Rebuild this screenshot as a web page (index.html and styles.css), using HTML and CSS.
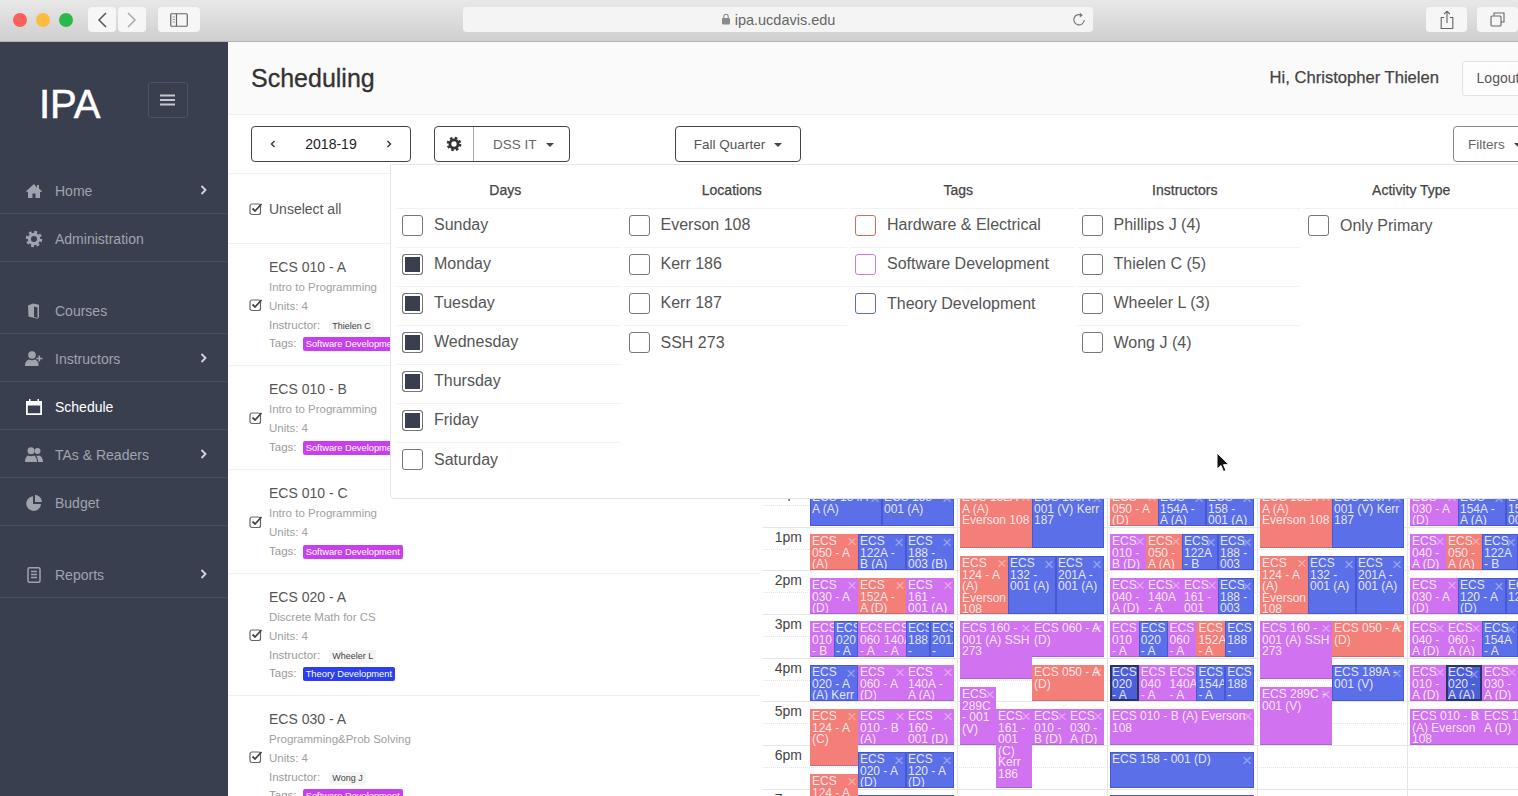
FILE: index.html
```html
<!DOCTYPE html>
<html lang="en">
<head>
<meta charset="utf-8">
<title>Scheduling - IPA</title>
<link rel="stylesheet" href="styles.css">
</head>
<body>
<header class="chrome">
  <div class="dots"><span class="dot red-dot"></span><span class="dot yellow-dot"></span><span class="dot green-dot"></span></div>
  <div class="nav-btns">
    <button class="cbtn back"><svg width="12" height="18" viewBox="0 0 12 18"><path d="M10 2 3 9l7 7" fill="none" stroke="#555" stroke-width="1.5"/></svg></button>
    <button class="cbtn back"><svg width="12" height="18" viewBox="0 0 12 18"><path d="M2 2l7 7-7 7" fill="none" stroke="#aaa" stroke-width="1.5"/></svg></button>
  </div>
  <button class="cbtn side"><svg width="18" height="14" viewBox="0 0 18 14"><rect x=".75" y=".75" width="16.5" height="12.5" rx="1" fill="none" stroke="#666" stroke-width="1.2"/><path d="M6.5 1v12" stroke="#666" stroke-width="1.2"/><path d="M2.5 4h2.5M2.5 6.5h2.5M2.5 9h2.5" stroke="#999"/></svg></button>
  <div class="url">
    <span class="url-text"><svg width="10" height="12" viewBox="0 0 10 12"><rect x="1" y="5" width="8" height="6.5" rx="1" fill="#8a8a8a"/><path d="M2.8 5V3.4a2.2 2.2 0 0 1 4.4 0V5" fill="none" stroke="#8a8a8a" stroke-width="1.1"/></svg> ipa.ucdavis.edu</span>
    <svg class="reload" width="14" height="15" viewBox="0 0 14 15"><path d="M9.5 3.2A5.2 5.2 0 1 0 12.2 8" fill="none" stroke="#777" stroke-width="1.2"/><path d="M7.8 .6l3 2.6-3 2.4z" fill="#777"/></svg>
  </div>
  <button class="cbtn share"><svg width="14" height="20" viewBox="0 0 14 20"><path d="M4 7.5H1.2v11h11.6v-11H10M7 13V1.5M4.2 4 7 1.2 9.8 4" fill="none" stroke="#666" stroke-width="1.1"/></svg></button>
  <button class="cbtn tabs"><svg width="15" height="15" viewBox="0 0 15 15"><path d="M4 3.5V1h10v9h-3" fill="none" stroke="#666" stroke-width="1.1"/><rect x="1" y="4" width="10" height="10" rx="1" fill="none" stroke="#666" stroke-width="1.1"/></svg></button>
</header>

<div class="app">
  <aside class="sidebar">
    <div class="brand">
      <span class="logo">IPA</span>
      <button class="burger"><svg width="15" height="12" viewBox="0 0 15 12"><path d="M0 1.5h15M0 6h15M0 10.5h15" stroke="#c3c6cf" stroke-width="2.2"/></svg></button>
    </div>
    <nav class="nav-group">
      <a class="nav-item"><svg class="nav-icon" viewBox="0 0 18 18"><path d="M9 2 1 9.3l1 1L3 9.5V16h4.5v-4.5h3V16H15V9.5l1 .8 1-1-3-2.7V3h-2v2.8z"/></svg><span>Home</span><svg class="chev" viewBox="0 0 7 10"><path d="M1.5 1l4 4-4 4"/></svg></a>
      <a class="nav-item"><svg class="nav-icon" viewBox="0 0 18 18"><circle cx="9" cy="9" r="4.6" fill="none" stroke="#a0a3ad" stroke-width="3.2"/><circle cx="9" cy="9" r="7" fill="none" stroke="#a0a3ad" stroke-width="2.4" stroke-dasharray="2.9 2.6"/></svg><span>Administration</span></a>
    </nav>
    <nav class="nav-group">
      <a class="nav-item"><svg class="nav-icon" viewBox="0 0 18 18"><path d="M3 3.5 8 1.5l6 1.3v12.5l-1.5 1.5L3.5 14.5zM9 4.5V15l3.5 1V5.4z"/></svg><span>Courses</span></a>
      <a class="nav-item"><svg class="nav-icon" viewBox="0 0 18 18"><circle cx="7" cy="5" r="3.8"/><path d="M0 16c0-4 2-6 4-6.5 1.800 1 4.200 1 6 0 1.400.4 2.800 1.600 3.500 3.500V16z"/><path d="M13.500 5.500h1.600v2.200h2.400v1.600h-2.400v2.200h-1.600V9.300h-2.300V7.700h2.300z"/></svg><span>Instructors</span><svg class="chev" viewBox="0 0 7 10"><path d="M1.500 1l4 4-4 4"/></svg></a>
      <a class="nav-item active"><svg class="nav-icon" viewBox="0 0 18 18"><path d="M1 3h3V1h1.500v2h7V1H14v2h3v14H1zM2.800 7.500v7.700h12.400V7.500z"/></svg><span>Schedule</span></a>
      <a class="nav-item"><svg class="nav-icon" viewBox="0 0 18 18"><circle cx="6" cy="4.800" r="3.500"/><circle cx="12.500" cy="5" r="3"/><path d="M0 16c0-3 1-5.500 3-6.500 2 1 4 1 6 0 2 1 3 3.500 3 6.500z"/><path d="M13 16c0-2.500-.5-5-2-6.500 1.200.5 2.300.5 3.500 0 2 1 3.500 3 3.500 6.500z"/></svg><span>TAs &amp; Readers</span><svg class="chev" viewBox="0 0 7 10"><path d="M1.500 1l4 4-4 4"/></svg></a>
      <a class="nav-item"><svg class="nav-icon" viewBox="0 0 18 18"><path d="M8 2.200A7.400 7.400 0 1 0 16 10H8z"/><path d="M10 .8A7.500 7.500 0 0 1 17 8h-7z"/></svg><span>Budget</span></a>
    </nav>
    <nav class="nav-group">
      <a class="nav-item"><svg class="nav-icon" viewBox="0 0 18 18"><rect x="3" y="1.800" width="12" height="14.500" rx="1.500" fill="none" stroke="#a0a3ad" stroke-width="1.500"/><path d="M6 5.500h6M6 8.500h6M6 11.500h6" stroke="#a0a3ad" stroke-width="1.500"/></svg><span>Reports</span><svg class="chev" viewBox="0 0 7 10"><path d="M1.500 1l4 4-4 4"/></svg></a>
    </nav>
  </aside>

  <main class="main">
    <div class="page-head">
      <h1>Scheduling</h1>
      <span class="hello">Hi, Christopher Thielen</span>
      <button class="logout">Logout</button>
    </div>
    <div class="toolbar">
      <div class="year"><svg class="mini" viewBox="0 0 6 8"><path d="M4.500 1 1.500 4l3 3"/></svg><span>2018-19</span><svg class="mini" viewBox="0 0 6 8"><path d="M1.500 1l3 3-3 3"/></svg></div>
      <div class="dept">
        <span class="gear"><svg width="16" height="16" viewBox="0 0 18 18"><circle cx="9" cy="9" r="4.600" fill="none" stroke="#333" stroke-width="3.200"/><circle cx="9" cy="9" r="7" fill="none" stroke="#333" stroke-width="2.400" stroke-dasharray="2.900 2.600"/></svg></span>
        <span class="dept-name">DSS IT<i class="caret"></i></span>
      </div>
      <button class="quarter">Fall Quarter<i class="caret"></i></button>
      <button class="filters">Filters<i class="caret"></i></button>
    </div>
    <div class="content">
      <section class="list">
        <div class="unselect"><svg class="check" viewBox="0 0 14 14"><rect x="1" y="2" width="10.500" height="10.500" rx="2" fill="none" stroke="#666" stroke-width="1.200"/><path d="M3.500 6.500l2.500 2.500 6.500-7" fill="none" stroke="#444" stroke-width="1.800"/></svg><span>Unselect all</span></div>

        <article class="course">
          <svg class="check" viewBox="0 0 14 14"><rect x="1" y="2" width="10.500" height="10.500" rx="2" fill="none" stroke="#666" stroke-width="1.200"/><path d="M3.500 6.500l2.500 2.500 6.500-7" fill="none" stroke="#444" stroke-width="1.800"/></svg>
          <div>
            <div class="c-title">ECS 010 - A</div>
            <div class="c-sub">Intro to Programming</div>
            <div class="c-units">Units: 4</div>
            <div class="c-inst">Instructor: <span class="pill">Thielen C</span></div>
            <div class="c-tags">Tags: <span class="tag soft">Software Development</span></div>
          </div>
        </article>
        <article class="course">
          <svg class="check" viewBox="0 0 14 14"><rect x="1" y="2" width="10.500" height="10.500" rx="2" fill="none" stroke="#666" stroke-width="1.200"/><path d="M3.500 6.500l2.500 2.500 6.500-7" fill="none" stroke="#444" stroke-width="1.800"/></svg>
          <div>
            <div class="c-title">ECS 010 - B</div>
            <div class="c-sub">Intro to Programming</div>
            <div class="c-units">Units: 4</div>
            <div class="c-inst">Tags: <span class="tag soft">Software Development</span></div>
          </div>
        </article>
        <article class="course">
          <svg class="check" viewBox="0 0 14 14"><rect x="1" y="2" width="10.500" height="10.500" rx="2" fill="none" stroke="#666" stroke-width="1.200"/><path d="M3.500 6.500l2.500 2.500 6.500-7" fill="none" stroke="#444" stroke-width="1.800"/></svg>
          <div>
            <div class="c-title">ECS 010 - C</div>
            <div class="c-sub">Intro to Programming</div>
            <div class="c-units">Units: 4</div>
            <div class="c-inst">Tags: <span class="tag soft">Software Development</span></div>
          </div>
        </article>
        <article class="course">
          <svg class="check" viewBox="0 0 14 14"><rect x="1" y="2" width="10.500" height="10.500" rx="2" fill="none" stroke="#666" stroke-width="1.200"/><path d="M3.500 6.500l2.500 2.500 6.500-7" fill="none" stroke="#444" stroke-width="1.800"/></svg>
          <div>
            <div class="c-title">ECS 020 - A</div>
            <div class="c-sub">Discrete Math for CS</div>
            <div class="c-units">Units: 4</div>
            <div class="c-inst">Instructor: <span class="pill">Wheeler L</span></div>
            <div class="c-tags">Tags: <span class="tag theory">Theory Development</span></div>
          </div>
        </article>
        <article class="course">
          <svg class="check" viewBox="0 0 14 14"><rect x="1" y="2" width="10.500" height="10.500" rx="2" fill="none" stroke="#666" stroke-width="1.200"/><path d="M3.500 6.500l2.500 2.500 6.500-7" fill="none" stroke="#444" stroke-width="1.800"/></svg>
          <div>
            <div class="c-title">ECS 030 - A</div>
            <div class="c-sub">Programming&amp;Prob Solving</div>
            <div class="c-units">Units: 4</div>
            <div class="c-inst">Instructor: <span class="pill">Wong J</span></div>
            <div class="c-tags">Tags: <span class="tag soft">Software Development</span></div>
          </div>
        </article>
      </section>

      <section class="cal">
        <div class="hour"><span>12pm</span></div>
        <div class="hour"><span>1pm</span></div>
        <div class="hour"><span>2pm</span></div>
        <div class="hour"><span>3pm</span></div>
        <div class="hour"><span>4pm</span></div>
        <div class="hour"><span>5pm</span></div>
        <div class="hour"><span>6pm</span></div>
        <div class="hour"><span>7pm</span></div>
        <div class="days">
          <div class="day">
            <div class="ev b" style="left:0;width:50%;top:7px;height:36px">ECS 154A - A (A)<i>×</i></div>
            <div class="ev b" style="left:50%;width:50%;top:7px;height:36px">ECS 158 - 001 (A)<i>×</i></div>
            <div class="ev r" style="left:0;width:33.33%;top:51px;height:36px">ECS 050 - A (A)<i>×</i></div>
            <div class="ev b" style="left:33.33%;width:33.33%;top:51px;height:36px">ECS 122A - B (A)<i>×</i></div>
            <div class="ev b" style="left:66.66%;width:33.33%;top:51px;height:36px">ECS 188 - 003 (B)<i>×</i></div>
            <div class="ev p" style="left:0;width:33.33%;top:95px;height:36px">ECS 030 - A (D)<i>×</i></div>
            <div class="ev r" style="left:33.33%;width:33.33%;top:95px;height:36px">ECS 152A - A (D)<i>×</i></div>
            <div class="ev p" style="left:66.66%;width:33.33%;top:95px;height:36px">ECS 161 - 001 (A)<i>×</i></div>
            <div class="ev p" style="left:0;width:16.66%;top:138px;height:36px">ECS 010 - B</div>
            <div class="ev b" style="left:16.66%;width:16.66%;top:138px;height:36px">ECS 020 - A</div>
            <div class="ev p" style="left:33.33%;width:16.66%;top:138px;height:36px">ECS 060 - A</div>
            <div class="ev p" style="left:50%;width:16.66%;top:138px;height:36px">ECS 140A - A</div>
            <div class="ev b" style="left:66.66%;width:16.66%;top:138px;height:36px">ECS 188 -</div>
            <div class="ev b" style="left:83.33%;width:16.67%;top:138px;height:36px">ECS 201A -</div>
            <div class="ev b" style="left:0;width:33.33%;top:182px;height:36px">ECS 020 - A (A) Kerr<i>×</i></div>
            <div class="ev p" style="left:33.33%;width:33.33%;top:182px;height:36px">ECS 060 - A (D)<i>×</i></div>
            <div class="ev p" style="left:66.66%;width:33.33%;top:182px;height:36px">ECS 140A - A (A)<i>×</i></div>
            <div class="ev r" style="left:0;width:33.33%;top:226px;height:57px">ECS 124 - A (C)<i>×</i></div>
            <div class="ev p" style="left:33.33%;width:33.33%;top:226px;height:36px">ECS 010 - B (A)<i>×</i></div>
            <div class="ev p" style="left:66.66%;width:33.33%;top:226px;height:36px">ECS 160 - 001 (D)<i>×</i></div>
            <div class="ev b" style="left:33.33%;width:33.33%;top:269px;height:36px">ECS 020 - A (D)<i>×</i></div>
            <div class="ev b" style="left:66.66%;width:33.33%;top:269px;height:36px">ECS 120 - A (D)<i>×</i></div>
            <div class="ev r" style="left:0;width:33.33%;top:291px;height:36px">ECS 124 - A<i>×</i></div>
            <div class="ev b" style="left:33.33%;width:66.67%;top:312px;height:36px"></div>
          </div>
          <div class="day">
            <div class="ev r" style="left:0;width:50%;top:7px;height:58px">ECS 152A - A (A) Everson 108<i>×</i></div>
            <div class="ev b" style="left:50%;width:50%;top:7px;height:58px">ECS 189A - 001 (V) Kerr 187<i>×</i></div>
            <div class="ev r" style="left:0;width:33.33%;top:73px;height:58px">ECS 124 - A (A) Everson 108<i>×</i></div>
            <div class="ev b" style="left:33.33%;width:33.33%;top:73px;height:58px">ECS 132 - 001 (A)<i>×</i></div>
            <div class="ev b" style="left:66.66%;width:33.33%;top:73px;height:58px">ECS 201A - 001 (A)<i>×</i></div>
            <div class="ev p" style="left:0;width:50%;top:138px;height:58px">ECS 160 - 001 (A) SSH 273<i>×</i></div>
            <div class="ev p" style="left:50%;width:50%;top:138px;height:36px">ECS 060 - A (D)<i>×</i></div>
            <div class="ev r" style="left:50%;width:50%;top:182px;height:36px">ECS 050 - A (D)<i>×</i></div>
            <div class="ev p" style="left:0;width:25%;top:204px;height:58px">ECS 289C - 001 (V)<i>×</i></div>
            <div class="ev p" style="left:25%;width:25%;top:226px;height:79px">ECS 161 - 001 (C) Kerr 186<i>×</i></div>
            <div class="ev p" style="left:50%;width:25%;top:226px;height:36px">ECS 010 - B (D)<i>×</i></div>
            <div class="ev p" style="left:75%;width:25%;top:226px;height:36px">ECS 030 - A (D)<i>×</i></div>
          </div>
          <div class="day">
            <div class="ev r" style="left:0;width:33.33%;top:7px;height:36px">ECS 050 - A (D)<i>×</i></div>
            <div class="ev b" style="left:33.33%;width:33.33%;top:7px;height:36px">ECS 154A - A (A)<i>×</i></div>
            <div class="ev b" style="left:66.66%;width:33.33%;top:7px;height:36px">ECS 158 - 001 (A)<i>×</i></div>
            <div class="ev p" style="left:0;width:25%;top:51px;height:36px">ECS 010 - B (D)<i>×</i></div>
            <div class="ev r" style="left:25%;width:25%;top:51px;height:36px">ECS 050 - A (A)<i>×</i></div>
            <div class="ev b" style="left:50%;width:25%;top:51px;height:36px">ECS 122A - B<i>×</i></div>
            <div class="ev b" style="left:75%;width:25%;top:51px;height:36px">ECS 188 - 003<i>×</i></div>
            <div class="ev p" style="left:0;width:25%;top:95px;height:36px">ECS 040 - A (D)<i>×</i></div>
            <div class="ev p" style="left:25%;width:25%;top:95px;height:36px">ECS 140A - A<i>×</i></div>
            <div class="ev p" style="left:50%;width:25%;top:95px;height:36px">ECS 161 - 001<i>×</i></div>
            <div class="ev b" style="left:75%;width:25%;top:95px;height:36px">ECS 188 - 003<i>×</i></div>
            <div class="ev p" style="left:0;width:20%;top:138px;height:36px">ECS 010 - A</div>
            <div class="ev b" style="left:20%;width:20%;top:138px;height:36px">ECS 020 - A</div>
            <div class="ev p" style="left:40%;width:20%;top:138px;height:36px">ECS 060 - A</div>
            <div class="ev r" style="left:60%;width:20%;top:138px;height:36px">ECS 152A - A</div>
            <div class="ev b" style="left:80%;width:20%;top:138px;height:36px">ECS 188 -</div>
            <div class="ev b sel" style="left:0;width:20%;top:182px;height:36px">ECS 020 - A</div>
            <div class="ev p" style="left:20%;width:20%;top:182px;height:36px">ECS 040 - A</div>
            <div class="ev p" style="left:40%;width:20%;top:182px;height:36px">ECS 140A - A</div>
            <div class="ev b" style="left:60%;width:20%;top:182px;height:36px">ECS 154A - A</div>
            <div class="ev b" style="left:80%;width:20%;top:182px;height:36px">ECS 188 -</div>
            <div class="ev p" style="left:0;width:100%;top:226px;height:36px">ECS 010 - B (A) Everson 108<i>×</i></div>
            <div class="ev b" style="left:0;width:100%;top:269px;height:36px">ECS 158 - 001 (D)<i>×</i></div>
            <div class="ev b" style="left:0;width:100%;top:312px;height:36px"></div>
          </div>
          <div class="day">
            <div class="ev r" style="left:0;width:50%;top:7px;height:58px">ECS 152A - A (A) Everson 108<i>×</i></div>
            <div class="ev b" style="left:50%;width:50%;top:7px;height:58px">ECS 189A - 001 (V) Kerr 187<i>×</i></div>
            <div class="ev r" style="left:0;width:33.33%;top:73px;height:58px">ECS 124 - A (A) Everson 108<i>×</i></div>
            <div class="ev b" style="left:33.33%;width:33.33%;top:73px;height:58px">ECS 132 - 001 (A)<i>×</i></div>
            <div class="ev b" style="left:66.66%;width:33.33%;top:73px;height:58px">ECS 201A - 001 (A)<i>×</i></div>
            <div class="ev p" style="left:0;width:50%;top:138px;height:58px">ECS 160 - 001 (A) SSH 273<i>×</i></div>
            <div class="ev r" style="left:50%;width:50%;top:138px;height:36px">ECS 050 - A (D)<i>×</i></div>
            <div class="ev b" style="left:50%;width:50%;top:182px;height:36px">ECS 189A - 001 (V)<i>×</i></div>
            <div class="ev p" style="left:0;width:50%;top:204px;height:58px">ECS 289C - 001 (V)<i>×</i></div>
          </div>
          <div class="day">
            <div class="ev p" style="left:0;width:33.33%;top:7px;height:36px">ECS 030 - A (D)<i>×</i></div>
            <div class="ev b" style="left:33.33%;width:33.33%;top:7px;height:36px">ECS 154A - A (A)<i>×</i></div>
            <div class="ev b" style="left:66.66%;width:33.33%;top:7px;height:36px">ECS 158 - 001 (A)<i>×</i></div>
            <div class="ev p" style="left:0;width:25%;top:51px;height:36px">ECS 040 - A (D)<i>×</i></div>
            <div class="ev r" style="left:25%;width:25%;top:51px;height:36px">ECS 050 - A (A)<i>×</i></div>
            <div class="ev b" style="left:50%;width:25%;top:51px;height:36px">ECS 122A - B<i>×</i></div>
            <div class="ev p" style="left:0;width:33.33%;top:95px;height:36px">ECS 030 - A (D)<i>×</i></div>
            <div class="ev b" style="left:33.33%;width:33.33%;top:95px;height:36px">ECS 120 - A (D)<i>×</i></div>
            <div class="ev b" style="left:66.66%;width:33.33%;top:95px;height:36px">ECS 122 - B<i>×</i></div>
            <div class="ev p" style="left:0;width:25%;top:138px;height:36px">ECS 040 - A (D)<i>×</i></div>
            <div class="ev p" style="left:25%;width:25%;top:138px;height:36px">ECS 060 - A (A)<i>×</i></div>
            <div class="ev b" style="left:50%;width:25%;top:138px;height:36px">ECS 154A - A<i>×</i></div>
            <div class="ev p" style="left:0;width:25%;top:182px;height:36px">ECS 010 - A (D)<i>×</i></div>
            <div class="ev b sel" style="left:25%;width:25%;top:182px;height:36px">ECS 020 - A (A)<i>×</i></div>
            <div class="ev p" style="left:50%;width:25%;top:182px;height:36px">ECS 030 - A (D)<i>×</i></div>
            <div class="ev p" style="left:0;width:50%;top:226px;height:36px">ECS 010 - B (A) Everson 108<i>×</i></div>
            <div class="ev p" style="left:50%;width:50%;top:226px;height:36px">ECS 140A - A (D)<i>×</i></div>
          </div>
        </div>
      </section>

      <div class="drop">
        <div class="drop-col">
          <h3>Days</h3>
          <label class="opt"><i class="box"></i>Sunday</label>
          <label class="opt"><i class="box on"></i>Monday</label>
          <label class="opt"><i class="box on"></i>Tuesday</label>
          <label class="opt"><i class="box on"></i>Wednesday</label>
          <label class="opt"><i class="box on"></i>Thursday</label>
          <label class="opt"><i class="box on"></i>Friday</label>
          <label class="opt"><i class="box"></i>Saturday</label>
        </div>
        <div class="drop-col">
          <h3>Locations</h3>
          <label class="opt"><i class="box"></i>Everson 108</label>
          <label class="opt"><i class="box"></i>Kerr 186</label>
          <label class="opt"><i class="box"></i>Kerr 187</label>
          <label class="opt"><i class="box"></i>SSH 273</label>
        </div>
        <div class="drop-col">
          <h3>Tags</h3>
          <label class="opt"><i class="box t-red"></i>Hardware &amp; Electrical</label>
          <label class="opt"><i class="box t-purple"></i>Software Development</label>
          <label class="opt"><i class="box t-blue"></i>Theory Development</label>
        </div>
        <div class="drop-col">
          <h3>Instructors</h3>
          <label class="opt"><i class="box"></i>Phillips J (4)</label>
          <label class="opt"><i class="box"></i>Thielen C (5)</label>
          <label class="opt"><i class="box"></i>Wheeler L (3)</label>
          <label class="opt"><i class="box"></i>Wong J (4)</label>
        </div>
        <div class="drop-col">
          <h3>Activity Type</h3>
          <label class="opt"><i class="box"></i>Only Primary</label>
        </div>
      </div>
      <svg class="cursor" width="14" height="22" viewBox="0 0 14 22"><path d="M1 1v16l4-3.500 2.500 6 2.500-1-2.500-5.800H13z" fill="#111" stroke="#fff" stroke-width="1"/></svg>
    </div>
  </main>
</div>
</body>
</html>
```
FILE: styles.css
```css
* { box-sizing: border-box; }
html, body { margin: 0; height: 100%; }
body {
  display: flex;
  flex-direction: column;
  overflow: hidden;
  font-family: "Liberation Sans", Arial, sans-serif;
  color: #555;
  background: #fff;
}
button { font-family: inherit; }

/* Browser chrome */
.chrome {
  flex: 0 0 42px;
  display: flex;
  align-items: flex-start;
  padding-top: 7px;
  background: linear-gradient(#e8e8e8, #cfcfcf);
  border-bottom: 1px solid #b4b4b4;
}
.dots { display: flex; gap: 9px; margin: 6px 0 0 13px; }
.dot { width: 14px; height: 14px; border-radius: 50%; }
.red-dot { background: #fb6159; }
.yellow-dot { background: #fcbc3e; }
.green-dot { background: #2cb84f; }
.cbtn {
  display: flex;
  align-items: center;
  justify-content: center;
  height: 25px;
  padding: 0;
  border: 0;
  border-radius: 4px;
  background: #f6f6f6;
}
.nav-btns { display: flex; gap: 2px; margin-left: 15px; }
.back { width: 28px; }
.side { width: 42px; margin-left: 12px; }
.url {
  position: relative;
  display: flex;
  align-items: center;
  justify-content: center;
  width: 631px;
  height: 25px;
  margin-left: 263px;
  border-radius: 4px;
  background: #f4f4f4;
  font-size: 14.500px;
  color: #666;
}
.reload { position: absolute; right: 7px; top: 5px; }
.share { width: 41px; margin-left: 333px; }
.tabs { width: 41px; margin-left: 10px; }

/* Layout */
.app { flex: 1; display: flex; min-height: 0; }
.sidebar {
  flex: 0 0 228px;
  background: #3a3f50;
  color: #a0a3ad;
}
.brand {
  display: flex;
  align-items: center;
  height: 123.500px;
  padding-left: 39px;
}
.logo { font-size: 40px; color: #fff; line-height: 1; -webkit-text-stroke: .5px #fff; }
.burger {
  display: flex;
  align-items: center;
  justify-content: center;
  width: 40px;
  height: 36px;
  margin: -8px 0 0 47px;
  padding: 0;
  background: transparent;
  border: 1px solid #4d5266;
  border-radius: 3px;
}
.nav-group + .nav-group { margin-top: 24px; }
.nav-item {
  display: flex;
  align-items: center;
  height: 48px;
  padding: 3px 21px 0 25px;
  border-bottom: 1px solid #474c5f;
  font-size: 14px;
}
.nav-item > span { margin-left: 12px; }
.nav-icon { width: 18px; height: 18px; fill: #a0a3ad; }
.active { color: #fff; }
.active .nav-icon { fill: #fff; }
.chev {
  width: 7px;
  height: 10px;
  margin-left: auto;
  margin-top: -2px;
  fill: none;
  stroke: #d5d7dd;
  stroke-width: 1.800;
}

.main { flex: 1; min-width: 0; display: flex; flex-direction: column; }
.page-head {
  flex: 0 0 73px;
  display: flex;
  align-items: center;
  padding-left: 23px;
  background: #fafafa;
  border-bottom: 1px solid #efefef;
}
.page-head h1 { margin: 0; font-size: 25px; font-weight: 400; color: #333; -webkit-text-stroke: .3px #333; }
.hello { margin-left: auto; font-size: 16.600px; color: #444; -webkit-text-stroke: .25px #444; }
.logout {
  width: 72px;
  height: 35px;
  margin: 0 -16px 0 23px;
  background: #fdfdfd;
  border: 1px solid #e2e2e2;
  border-radius: 3px;
  font-size: 14px;
  color: #555;
}
.toolbar {
  flex: 0 0 59px;
  display: flex;
  align-items: flex-start;
  padding: 11px 0 0 23px;
  border-bottom: 1px solid #f0f0f0;
}
.year, .dept, .quarter, .filters {
  height: 36px;
  background: #fff;
  border: 1px solid #444;
  border-radius: 4px;
  font-size: 13.500px;
  color: #555;
}
.year {
  display: flex;
  align-items: center;
  justify-content: space-between;
  width: 160px;
  padding: 0 18px;
  font-size: 14px;
  color: #222;
}
.mini { width: 6px; height: 8px; fill: none; stroke: #333; stroke-width: 1.400; }
.dept { display: flex; width: 136px; margin-left: 23px; }
.gear { display: flex; align-items: center; justify-content: center; width: 39px; border-right: 1px solid #aaa; }
.dept-name { flex: 1; align-self: center; padding-left: 19px; color: #666; }
.caret {
  display: inline-block;
  margin-left: 9px;
  vertical-align: 2px;
  border-top: 4px solid #444;
  border-left: 4px solid transparent;
  border-right: 4px solid transparent;
}
.quarter { width: 126px; margin-left: 105px; padding: 0; }
.filters {
  width: 82px;
  margin: 0 -17px 0 auto;
  padding: 0 0 0 14px;
  text-align: left;
  border-color: #888;
  color: #666;
}

/* Course list */
.content { position: relative; flex: 1; display: flex; min-height: 0; }
.list { flex: 0 0 532px; overflow: hidden; }
.unselect {
  display: flex;
  align-items: center;
  height: 70px;
  padding-left: 21px;
  border-bottom: 1px solid #f0f0f0;
  font-size: 14px;
  color: #555;
}
.check { flex: 0 0 14px; width: 14px; height: 14px; margin-right: 6px; }
.course {
  display: flex;
  align-items: center;
  padding: 13px 0 13px 21px;
  border-bottom: 1px solid #f0f0f0;
}
.c-title { height: 20px; font-size: 14px; line-height: 20px; color: #555; }
.c-sub { height: 20px; font-size: 11.500px; line-height: 20px; color: #a0a0a0; }
.c-units { height: 19px; font-size: 11.500px; line-height: 19px; color: #a0a0a0; }
.c-inst, .c-tags { height: 18px; font-size: 11.500px; line-height: 18px; color: #999; }
.pill {
  display: inline-block;
  margin-left: 6px;
  padding: 0 3px;
  background: #f5f5f5;
  font-size: 9px;
  line-height: 13px;
  color: #444;
}
.tag {
  display: inline-block;
  margin-left: 3px;
  padding: 0 3px;
  border-radius: 2px;
  font-size: 9.300px;
  line-height: 14px;
  color: #fff;
  white-space: nowrap;
}
.soft { background: #c83ff0; }
.theory { background: #2b3ff0; }

/* Calendar */
.cal { position: relative; flex: 1; min-width: 0; padding-top: 309px; overflow: hidden; }
.hour {
  position: relative;
  height: 43.670px;
  margin-left: 3px;
  border-top: 1px solid #e6e6e6;
  font-size: 14px;
  color: #444;
}
.hour::after {
  content: "";
  position: absolute;
  left: 0;
  right: 0;
  top: 21px;
  border-top: 1px dotted #e4e4e4;
}
.hour span {
  position: absolute;
  left: 9px;
  top: 1px;
  width: 30px;
  text-align: right;
  white-space: nowrap;
  line-height: 16px;
}
.days {
  position: absolute;
  left: 47px;
  top: 309px;
  bottom: 0;
  display: flex;
  width: 750px;
}
.day {
  position: relative;
  flex: 0 0 144px;
  margin: 0 3px;
}
.day + .day::before {
  content: "";
  position: absolute;
  left: -3px;
  top: 0;
  bottom: 0;
  border-left: 1px solid #e6e6e6;
}
.ev {
  position: absolute;
  padding: 2px 2px 0;
  overflow: hidden;
  font-size: 12px;
  line-height: 11.500px;
  color: rgba(255, 255, 255, .85);
  border-bottom: 1px solid rgba(60, 60, 120, .25);
}
.ev i {
  position: absolute;
  right: 1px;
  top: 2px;
  font-style: normal;
  font-size: 17px;
  line-height: 12px;
  color: rgba(255, 255, 255, .38);
}
.r { background: #f47e78; }
.b { background: #5b6fe9; border: 1px solid #4658d6; padding: 1px 1px 0; }
.p { background: #d173f1; }
.sel { border: 2px solid #2c3560; background: #4b5fd8; padding: 0; }

/* Filter dropdown */
.drop {
  position: absolute;
  left: 162px;
  top: -10px;
  width: 1200px;
  height: 335px;
  display: flex;
  padding: 0 0 0 6px;
  background: #fff;
  border: 1px solid #e6e6e6;
  border-radius: 0 0 4px 4px;
  gap: 3px;
}
.drop-col { flex: 0 0 223.500px; }
.drop-col h3 {
  margin: 0;
  height: 44px;
  padding-right: 7px;
  border-bottom: 1px solid #f2f2f2;
  font-size: 14px;
  font-weight: 400;
  line-height: 50px;
  text-align: center;
  color: #444;
  -webkit-text-stroke: .25px #444;
}
.opt {
  display: flex;
  align-items: center;
  height: 39px;
  padding: 0 0 6px 5px;
  border-bottom: 1px solid #f2f2f2;
  font-size: 16px;
  color: #555;
}
.opt:last-child { border-bottom: 0; }
.box {
  flex: 0 0 21px;
  width: 21px;
  height: 21px;
  margin-right: 11px;
  border: 1.500px solid #777;
  border-radius: 3px;
  background: #fff;
}
.on { box-shadow: inset 0 0 0 2px #fff; background: #3a3f50; }
.box.t-red { border-color: #e2645e; }
.box.t-purple { border-color: #c77ddc; }
.box.t-blue { border-color: #5a68e0; }
.cursor { position: absolute; left: 988px; top: 278px; }
```
